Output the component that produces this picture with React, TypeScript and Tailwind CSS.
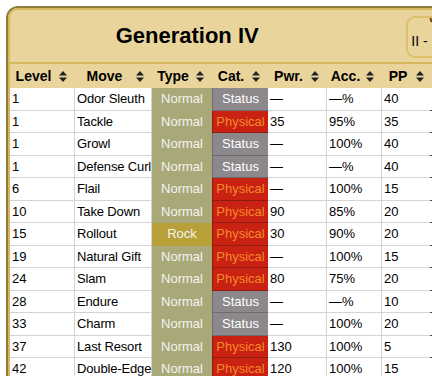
import React from "react";

type Row = [string, string, string, string, string, string, string];

const rows: Row[] = [
  ["1", "Odor Sleuth", "Normal", "Status", "—", "—%", "40"],
  ["1", "Tackle", "Normal", "Physical", "35", "95%", "35"],
  ["1", "Growl", "Normal", "Status", "—", "100%", "40"],
  ["1", "Defense Curl", "Normal", "Status", "—", "—%", "40"],
  ["6", "Flail", "Normal", "Physical", "—", "100%", "15"],
  ["10", "Take Down", "Normal", "Physical", "90", "85%", "20"],
  ["15", "Rollout", "Rock", "Physical", "30", "90%", "20"],
  ["19", "Natural Gift", "Normal", "Physical", "—", "100%", "15"],
  ["24", "Slam", "Normal", "Physical", "80", "75%", "20"],
  ["28", "Endure", "Normal", "Status", "—", "—%", "10"],
  ["33", "Charm", "Normal", "Status", "—", "100%", "20"],
  ["37", "Last Resort", "Normal", "Physical", "130", "100%", "5"],
  ["42", "Double-Edge", "Normal", "Physical", "120", "100%", "15"],
];

const widths = [65, 77, 60, 56, 59, 55, 50];
const heads = ["Level", "Move", "Type", "Cat.", "Pwr.", "Acc.", "PP"];

function SortIcon() {
  return (
    <svg width="8" height="11" viewBox="0 0 8 11" className="absolute right-[8px] top-[7px]">
      <path d="M4 0 L8 4.5 L0 4.5 Z" fill="#222" />
      <path d="M0 6.5 L8 6.5 L4 11 Z" fill="#222" />
    </svg>
  );
}

export default function App() {
  return (
    <div
      className="w-[432px] h-[376px] overflow-hidden bg-white"
      style={{ fontFamily: '"Liberation Sans", Arial, sans-serif' }}
    >
      <div className="ml-[6px] mt-[6px] w-[480px] border-t-2 border-l-2 border-[#8e7b3d] rounded-tl-[12px]">
        <div className="border-t-2 border-l-2 border-[#d8b75e] rounded-tl-[10px] bg-[#e9d59c]">
          <div className="flex h-[52px] items-start">
            <div className="w-[356px] h-[50px] flex items-center justify-center text-[22px] font-bold text-black">
              Generation IV
            </div>
            <div className="ml-[42px] mt-[6px] w-[80px] h-[42px] border-2 border-[#dcc06c] rounded-[9px] overflow-hidden pl-[3px] leading-none">
              <div className="text-[12px] font-bold text-[#6b3a10] pl-[18px] h-[14px] -translate-y-[5px]">
                Other
              </div>
              <div className="text-[14px] text-black mt-[2px] whitespace-nowrap">II -&nbsp;&nbsp;III</div>
            </div>
          </div>
          <div className="h-[2px] bg-[#d9b75e]" />
          <div className="flex h-[24px] bg-[#e9d59c]">
            {heads.map((h, i) => (
              <div
                key={h}
                className="relative flex items-center justify-center text-[14px] font-bold text-black pr-[18px]"
                style={{ width: widths[i] }}
              >
                {h}
                <SortIcon />
              </div>
            ))}
          </div>
          <div className="bg-white">
            {rows.map((r, ri) => (
              <div key={ri} className="flex h-[22.5px] text-[13px] text-black">
                <div className="w-[65px] pl-[2px] flex items-center border-r border-b border-[#d4d4d4]">{r[0]}</div>
                <div className="relative z-10 w-[77px] pl-[2px] flex items-center border-r border-b border-[#d4d4d4] whitespace-nowrap tracking-[-0.15px]">
                  {r[1]}
                </div>
                <div
                  className={
                    "w-[60px] flex items-center justify-center text-[#f4f4f0] border-b " +
                    (r[2] === "Rock" ? "bg-[#b8a038] border-[#b8a038]" : "bg-[#a8a878] border-[#a8a878]")
                  }
                >
                  {r[2]}
                </div>
                <div
                  className={
                    "w-[56px] flex items-center justify-center border-l border-b " +
                    (r[3] === "Status"
                      ? "bg-[#8c888c] text-white border-[#6e6a6e]"
                      : "bg-[#c92112] text-[#f58a2a] border-[#8f1a10]")
                  }
                >
                  {r[3]}
                </div>
                <div className="w-[59px] pl-[2px] flex items-center border-r border-b border-[#d4d4d4]">{r[4]}</div>
                <div className="w-[55px] pl-[2px] flex items-center border-r border-b border-[#d4d4d4]">{r[5]}</div>
                <div className="w-[48px] pl-[2px] flex items-center border-b border-[#d4d4d4]">{r[6]}</div>
                <div className="w-[2px] border-b border-[#7a2a20] bg-white" />
              </div>
            ))}
          </div>
        </div>
      </div>
    </div>
  );
}
